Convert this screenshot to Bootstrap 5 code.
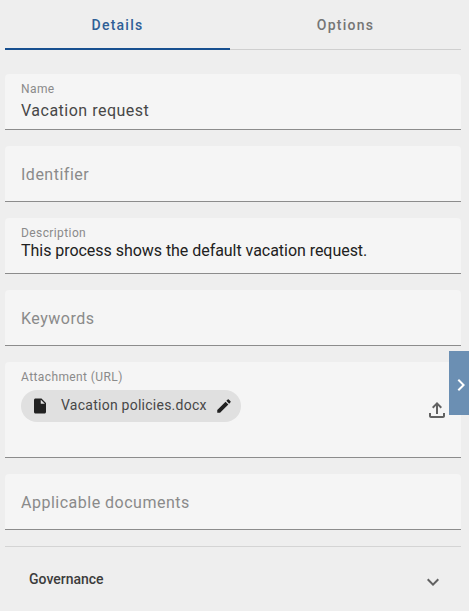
<!DOCTYPE html>
<html lang="en">
<head>
  <meta charset="UTF-8">
  <meta name="viewport" content="width=device-width, initial-scale=1">
  <title>Details</title>
  <link href="https://cdn.jsdelivr.net/npm/bootstrap@5.3.0/dist/css/bootstrap.min.css" rel="stylesheet">
  <style>
    html, body { height: 100%; overflow: hidden; }
    body {
      background: #eeeeee;
      font-family: Roboto, "Liberation Sans", sans-serif;
      color: #212121;
    }
    .panel-wrap { padding: 0 8px 0 5px; }
    .tab-bar { height: 50px; border-bottom: 1px solid #cfcfcf; }
    .tab-item {
      width: 225px;
      height: 50px;
      font-size: 14px;
      font-weight: 500;
      letter-spacing: 1.25px;
      line-height: 50px;
      text-align: center;
      color: #757575;
    }
    .tab-item.on { color: #2f5f97; border-bottom: 2px solid #174f8f; }
    .tab-rest { width: 231px; }
    .fields { padding-top: 24px; gap: 16px; }
    .field-box {
      height: 56px;
      background: #f5f5f5;
      border-bottom: 1px solid #8c8c8c;
      border-radius: 4px 4px 0 0;
      padding: 0 16px;
    }
    .field-box.tall { height: 96px; }
    .field-label { font-size: 12px; line-height: 14px; color: #8a8a8a; padding-top: 8px; letter-spacing: .4px; }
    .field-value { font-size: 16px; line-height: 22px; margin-top: 4px; color: #474747; letter-spacing: .5px; }
    .field-empty { font-size: 16px; line-height: 57px; color: #8a8a8a; letter-spacing: .5px; }
    .field-desc { font-size: 16px; line-height: 18px; margin-top: 2px; color: #212121; letter-spacing: -.04px; }
    .file-chip {
      height: 32px;
      width: 220px;
      margin-top: 6px;
      background: #e0e0e0;
      border-radius: 16px;
      padding: 0 8px 0 10px;
      font-size: 14px;
      letter-spacing: .25px;
      color: #474747;
    }
    .chip-name { margin-left: 12px; margin-bottom: 2px; white-space: nowrap; }
    .upload-btn { position: absolute; right: 12px; top: 36px; line-height: 0; }
    .side-toggle {
      position: absolute;
      left: 449px;
      top: 351px;
      width: 20px;
      height: 64px;
      padding: 3px 0 0 4px;
      background: #6b8fb3;
    }
    .divider-line { border-top: 1px solid #d4d4d4; margin-top: 16px; }
    .gov-row { height: 66px; padding: 0 16px 0 24px; font-size: 14px; font-weight: 500; color: #3c3c3c; }
    .gov-title { margin-bottom: 2px; }
  </style>
</head>
<body>
  <div class="panel-wrap">
    <div class="tab-bar d-flex">
      <div class="tab-item on">Details</div>
      <div class="tab-item tab-rest">Options</div>
    </div>

    <div class="fields d-flex flex-column">
      <div class="field-box">
        <div class="field-label">Name</div>
        <div class="field-value">Vacation request</div>
      </div>
      <div class="field-box"><div class="field-empty">Identifier</div></div>
      <div class="field-box">
        <div class="field-label">Description</div>
        <div class="field-desc">This process shows the default vacation request.</div>
      </div>
      <div class="field-box"><div class="field-empty">Keywords</div></div>
      <div class="field-box tall position-relative">
        <div class="field-label">Attachment (URL)</div>
        <div class="file-chip d-flex align-items-center">
          <svg width="18" height="18" viewBox="0 0 24 24" fill="#212121"><path d="M14 2H6c-1.1 0-2 .9-2 2v16c0 1.1.9 2 2 2h12c1.1 0 2-.9 2-2V8l-6-6zm-1 7V3.5L18.5 9H13z"/></svg>
          <span class="chip-name">Vacation policies.docx</span>
          <svg class="ms-auto" width="18" height="18" viewBox="0 0 24 24" fill="#212121"><path d="M3 17.25V21h3.75L17.81 9.94l-3.75-3.75L3 17.25zM20.71 7.04c.39-.39.39-1.02 0-1.41l-2.34-2.34a.996.996 0 0 0-1.41 0l-1.83 1.83 3.75 3.75 1.83-1.83z"/></svg>
        </div>
        <div class="upload-btn">
          <svg width="24" height="24" viewBox="0 0 24 24" fill="#616161"><path d="M18 15v3H6v-3H4v3c0 1.1.9 2 2 2h12c1.1 0 2-.9 2-2v-3h-2zM7 9l1.41 1.41L11 7.83V16h2V7.83l2.59 2.58L17 9l-5-5-5 5z"/></svg>
        </div>
      </div>
      <div class="field-box"><div class="field-empty">Applicable documents</div></div>
    </div>

    <div class="divider-line"></div>
    <div class="gov-row d-flex align-items-center justify-content-between">
      <span class="gov-title">Governance</span>
      <svg width="24" height="24" viewBox="0 0 24 24" fill="#616161"><path d="M7.41 8.59 12 13.17l4.59-4.58L18 10l-6 6-6-6z" transform="translate(0 2)"/></svg>
    </div>
  </div>

  <div class="side-toggle d-flex align-items-center justify-content-center">
    <svg width="24" height="24" viewBox="0 0 24 24" fill="#fff" class="flex-shrink-0"><path d="M10 6 8.59 7.41 13.17 12l-4.58 4.59L10 18l6-6z"/></svg>
  </div>
</body>
</html>
